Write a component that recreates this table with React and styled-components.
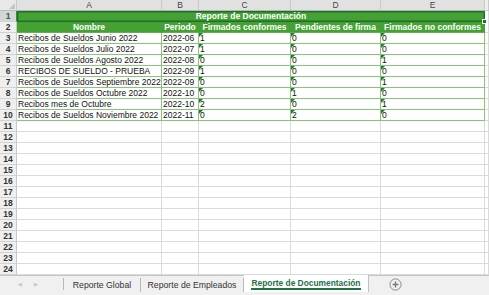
import React from "react";
import styled, { createGlobalStyle } from "styled-components";

const GREEN = "#46a135";
const GRID = "#dadada";
const DATA_LINE = "#86c775";

const COLS = [
  { key: "A", w: 145 },
  { key: "B", w: 37 },
  { key: "C", w: 92 },
  { key: "D", w: 90 },
  { key: "E", w: 104 },
];
const TITLE_W = COLS.reduce((s, c) => s + c.w, 0);

const HEADERS = [
  "Nombre",
  "Periodo",
  "Firmados conformes",
  "Pendientes de firma",
  "Firmados no conformes",
];

const ROWS = [
  ["Recibos de Sueldos Junio 2022", "2022-06", "1", "0", "0"],
  ["Recibos de Sueldos Julio 2022", "2022-07", "1", "0", "0"],
  ["Recibos de Sueldos Agosto 2022", "2022-08", "0", "0", "1"],
  ["RECIBOS DE SUELDO - PRUEBA", "2022-09", "1", "0", "0"],
  ["Recibos de Sueldos Septiembre 2022", "2022-09", "0", "0", "1"],
  ["Recibos de Sueldos Octubre 2022", "2022-10", "0", "1", "0"],
  ["Recibos mes de Octubre", "2022-10", "2", "0", "1"],
  ["Recibos de Sueldos Noviembre 2022", "2022-11", "0", "2", "0"],
];

function App() {
  const empty = [];
  for (let n = 11; n <= 24; n++) empty.push(n);

  return (
    <>
      <GlobalStyle />
      <Window>
        <Sheet>
          <Row>
            <Corner />
            {COLS.map((c) => (
              <ColHead key={c.key} $w={c.w} $sel>
                {c.key}
              </ColHead>
            ))}
            <ColHead $fill />
          </Row>

          <Row>
            <RowHead $sel>1</RowHead>
            <TitleCell>
              Reporte de Documentación
              <Handle />
            </TitleCell>
            <Cell $fill />
          </Row>

          <Row>
            <RowHead>2</RowHead>
            {COLS.map((c, i) => (
              <HeadCell key={c.key} $w={c.w}>
                {HEADERS[i]}
              </HeadCell>
            ))}
            <Cell $fill />
          </Row>

          {ROWS.map((r, ri) => (
            <Row key={ri}>
              <RowHead>{ri + 3}</RowHead>
              {COLS.map((c, i) => (
                <DataCell key={c.key} $w={c.w} $flag={i >= 2}>
                  {r[i]}
                </DataCell>
              ))}
              <Cell $fill />
            </Row>
          ))}

          {empty.map((n) => (
            <Row key={n}>
              <RowHead>{n}</RowHead>
              {COLS.map((c) => (
                <Cell key={c.key} $w={c.w} />
              ))}
              <Cell $fill />
            </Row>
          ))}
        </Sheet>

        <TabBar>
          <Nav>
            <Arrow>◀</Arrow>
            <Arrow>▶</Arrow>
          </Nav>
          <Tab $w={77}>Reporte Global</Tab>
          <Tab $w={103}>Reporte de Empleados</Tab>
          <Tab $w={125} $active>
            <span>Reporte de Documentación</span>
          </Tab>
          <AddArea>
            <svg width="13" height="13" viewBox="0 0 13 13">
              <circle cx="6.5" cy="6.5" r="5.6" fill="none" stroke="#8a8a8a" strokeWidth="1" />
              <path d="M6.5 3.6v5.8M3.6 6.5h5.8" stroke="#777" strokeWidth="1.4" />
            </svg>
          </AddArea>
        </TabBar>
      </Window>
    </>
  );
}

export default App;

const GlobalStyle = createGlobalStyle`
  html, body {
    margin: 0;
    padding: 0;
    overflow: hidden;
    background: #fff;
  }
  * { box-sizing: border-box; }
`;

const Window = styled.div`
  width: 489px;
  height: 295px;
  display: flex;
  flex-direction: column;
  font-family: "Liberation Sans", Arial, sans-serif;
  font-size: 8.5px;
  overflow: hidden;
`;

const Sheet = styled.div`
  height: 275px;
  display: flex;
  flex-direction: column;
  overflow: hidden;
`;

const Row = styled.div`
  display: flex;
  height: 11px;
  flex: none;
  line-height: 10px;
`;

const Corner = styled.div`
  width: 17px;
  flex: none;
  background: #e9e9e9;
  border-right: 1px solid #c9c9c9;
  border-bottom: 1px solid #bdbdbd;
  position: relative;
  &::after {
    content: "";
    position: absolute;
    right: 1px;
    bottom: 1px;
    border-left: 6px solid transparent;
    border-bottom: 6px solid #c4c4c4;
  }
`;

const ColHead = styled.div`
  width: ${(p) => (p.$w ? `${p.$w}px` : "auto")};
  flex: ${(p) => (p.$fill ? 1 : "none")};
  background: ${(p) => (p.$sel ? "#e1e1e1" : "#efefef")};
  border-right: 1px solid #c9c9c9;
  border-bottom: 1px solid ${(p) => (p.$sel ? "#b5b5b5" : "#c9c9c9")};
  color: #444;
  text-align: center;
  font-size: 8.5px;
`;

const RowHead = styled.div`
  width: 17px;
  flex: none;
  background: ${(p) => (p.$sel ? "#d6d6d6" : "#efefef")};
  border-right: 1px solid ${(p) => (p.$sel ? "#3b8a3a" : "#c9c9c9")};
  border-bottom: 1px solid #d2d2d2;
  color: ${(p) => (p.$sel ? "#1f6b33" : "#333")};
  text-align: center;
  font-size: 8.5px;
  font-weight: bold;
`;

const Cell = styled.div`
  width: ${(p) => (p.$w ? `${p.$w}px` : "auto")};
  flex: ${(p) => (p.$fill ? 1 : "none")};
  border-right: 1px solid ${GRID};
  border-bottom: 1px solid ${GRID};
  background: #fff;
`;

const TitleCell = styled.div`
  width: ${TITLE_W}px;
  flex: none;
  position: relative;
  background: ${GREEN};
  border: 1px solid #1f6e2d;
  box-shadow: inset 0 0 0 1px #2f8a2e;
  color: #fff;
  font-weight: bold;
  text-align: center;
  line-height: 9px;
`;

const Handle = styled.span`
  position: absolute;
  right: -3px;
  bottom: -3px;
  width: 5px;
  height: 5px;
  background: #1f6e3a;
  border: 1px solid #fff;
`;

const HeadCell = styled.div`
  width: ${(p) => p.$w}px;
  flex: none;
  background: ${GREEN};
  border-right: 1px solid ${GREEN};
  border-bottom: 1px solid #5fb04e;
  color: #fff;
  font-weight: bold;
  text-align: center;
  white-space: nowrap;
  overflow: visible;
  display: flex;
  justify-content: center;
`;

const DataCell = styled.div`
  width: ${(p) => p.$w}px;
  flex: none;
  position: relative;
  border-right: 1px solid ${DATA_LINE};
  border-bottom: 1px solid ${DATA_LINE};
  color: #111;
  padding-left: ${(p) => (p.$flag ? "1px" : "1px")};
  white-space: nowrap;
  overflow: hidden;
  &::before {
    content: "";
    display: ${(p) => (p.$flag ? "block" : "none")};
    position: absolute;
    left: 0;
    top: 0;
    border-top: 4px solid #1e7a3c;
    border-right: 4px solid transparent;
  }
`;

const TabBar = styled.div`
  height: 20px;
  display: flex;
  align-items: stretch;
  background: #f0f0f0;
  border-top: 1px solid #c6c6c6;
  padding-bottom: 3px;
  font-size: 8.7px;
  color: #333;
`;

const Nav = styled.div`
  width: 64px;
  display: flex;
  align-items: center;
  justify-content: flex-start;
  gap: 12px;
  padding-left: 18px;
  border-right: 1px solid #b8b8b8;
  margin: 2px 0;
`;

const Arrow = styled.span`
  color: #c4c4c4;
  font-size: 5px;
`;

const Tab = styled.div`
  width: ${(p) => p.$w}px;
  display: flex;
  align-items: center;
  justify-content: center;
  border-right: 1px solid ${(p) => (p.$active ? "#c0c0c0" : "#b8b8b8")};
  background: ${(p) => (p.$active ? "#fff" : "transparent")};
  margin-top: ${(p) => (p.$active ? "-1px" : "2px")};
  color: ${(p) => (p.$active ? "#217346" : "#333")};
  font-weight: ${(p) => (p.$active ? "bold" : "normal")};
  font-size: ${(p) => (p.$active ? "8.4px" : "8.7px")};
  span {
    border-bottom: 2px solid #217346;
    padding: 1px 1px 0;
    line-height: 10px;
  }
`;

const AddArea = styled.div`
  flex: 1;
  display: flex;
  align-items: center;
  padding-left: 20px;
`;
